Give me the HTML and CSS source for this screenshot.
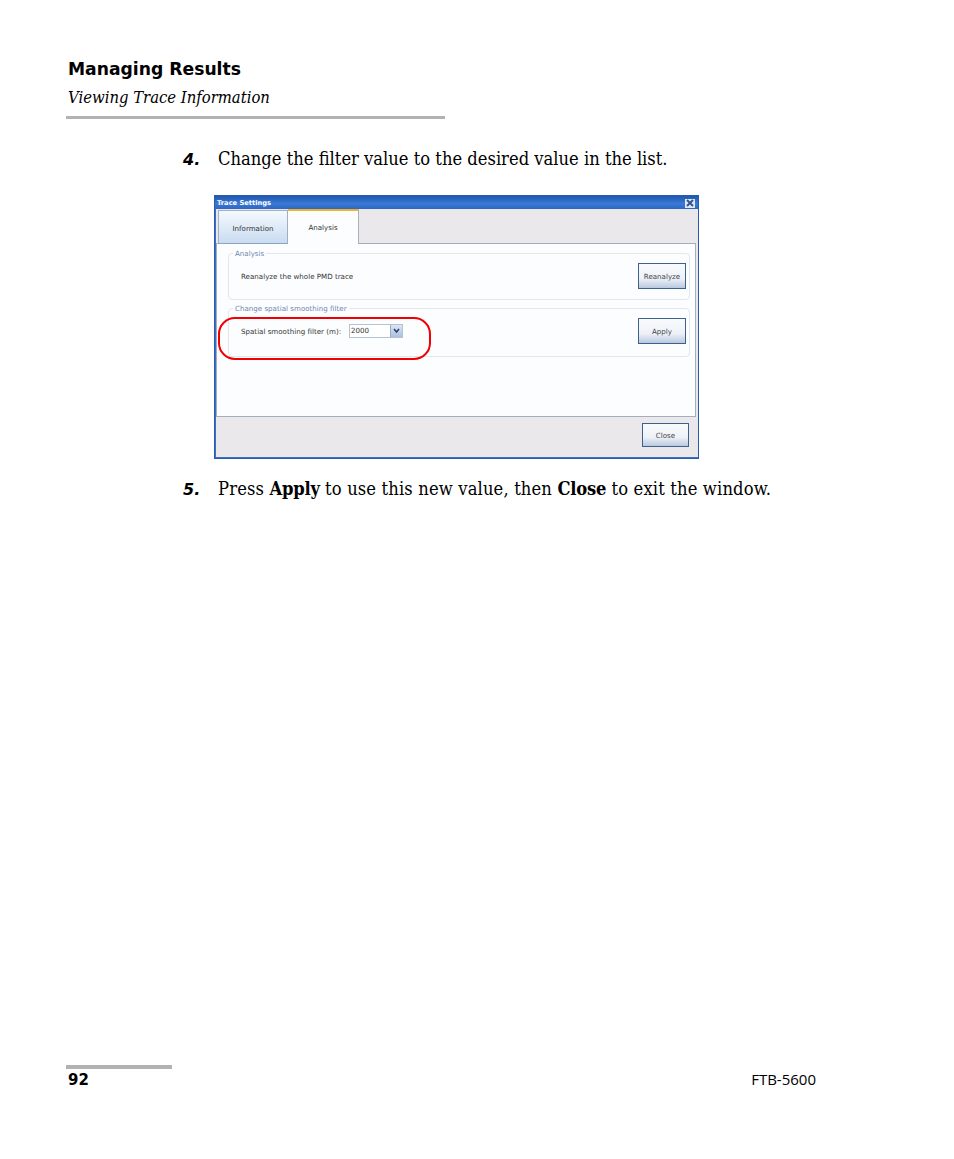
FILE: index.html
```html
<!DOCTYPE html>
<html lang="en">
<head>
<meta charset="utf-8">
<title>Managing Results</title>
<link rel="stylesheet" href="styles.css">
</head>
<body>
<div class="page">
  <header class="head">
    <div class="chapter">Managing Results</div>
    <div class="section">Viewing Trace Information</div>
    <div class="rule"></div>
  </header>
  <main class="content">
    <div class="step"><span class="num">4.</span><p>Change the filter value to the desired value in the list.</p></div>
    <div class="dialog">
      <div class="titlebar"><span>Trace Settings</span><span class="x">
        <svg width="8" height="8" viewBox="0 0 8 8"><path d="M1 1l6 6M7 1l-6 6" stroke="#33558f" stroke-width="2"/></svg></span></div>
      <div class="dlgbody">
        <div class="tabs">
          <div class="tab off">Information</div>
          <div class="tab on">Analysis</div>
        </div>
        <div class="panel">
          <fieldset class="group g1">
            <legend>Analysis</legend>
            <div class="label">Reanalyze the whole PMD trace</div>
            <div class="btn">Reanalyze</div>
          </fieldset>
          <fieldset class="group g2">
            <legend>Change spatial smoothing filter</legend>
            <div class="label">Spatial smoothing filter (m):</div>
            <div class="select"><span class="val">2000</span><span class="arrow">
              <svg width="7" height="6" viewBox="0 0 7 6"><path d="M1 1l2.500 3 2.500-3" fill="none" stroke="#2b3f63" stroke-width="1.500"/></svg></span></div>
            <div class="btn push">Apply</div>
          </fieldset>
          <div class="callout"></div>
        </div>
        <div class="actions"><div class="btn">Close</div></div>
      </div>
    </div>
    <div class="step s5"><span class="num">5.</span><p>Press <b>Apply</b> to use this new value, then <b>Close</b> to exit the window.</p></div>
  </main>
  <footer class="foot">
    <div class="footrule"></div>
    <div class="footrow"><span class="pageno">92</span><span class="model">FTB-5600</span></div>
  </footer>
</div>
</body>
</html>
```
FILE: styles.css
```css
* { box-sizing: border-box; }
html, body { margin: 0; background: #fff; }
.page { width: 954px; height: 1159px; display: flex; flex-direction: column; padding: 58px 0 0 66px; color: #000; overflow: hidden; }
.chapter { font: 700 17.200px/22px "DejaVu Sans", sans-serif; padding-left: 2px; }
.section { font: italic 16.500px/22px "DejaVu Serif", serif; font-stretch: condensed; padding-left: 2px; margin-top: 7px; }
.rule { width: 379px; height: 3px; background: #b2b2b2; margin-top: 7px; }
.content { padding-left: 117px; margin-top: 28px; }
.step { display: flex; align-items: baseline; height: 24px; }
.num { font: italic 700 16px/24px "DejaVu Sans", sans-serif; width: 35px; flex: none; }
.step p { margin: 0; font: 18.200px/24px "DejaVu Serif", serif; font-stretch: condensed; white-space: nowrap; }
.step b { font-weight: 700; letter-spacing: -0.200px; }
.s5 { margin-top: 18px; }
.s5 p { letter-spacing: 0.150px; }
.dialog { width: 485px; height: 264px; margin: 24px 0 0 31px; border: 1px solid #2a5aa8; background: #3a72c8; padding: 0 0 1px 1px; font-family: "DejaVu Sans", sans-serif; display: flex; flex-direction: column; }
.titlebar { height: 13px; flex: none; display: flex; justify-content: space-between; align-items: center; color: #fff; font: 700 6.700px/13px "DejaVu Sans", sans-serif; background: linear-gradient(#1f57b0, #3a7ad6 60%, #2e66c0); margin: 0 0 0 -1px; padding: 1px 2px 0; }
.x { width: 10px; height: 9px; background: #dfe8f6; display: flex; align-items: center; justify-content: center; margin-right: 1px; }
.dlgbody { flex: 1; background: #ebe8ec; display: flex; flex-direction: column; min-height: 0; }
.tabs { height: 35px; flex: none; display: flex; align-items: flex-end; padding-left: 2px; position: relative; z-index: 1; margin-bottom: -1px; }
.tab { font-size: 7.100px; color: #333; display: flex; align-items: center; justify-content: center; }
.off { width: 70px; height: 34px; background: linear-gradient(#f5f9fe, #c9dcf1); border: 1px solid #9fb0c4; border-bottom-color: #8fa3bd; padding-top: 2px; }
.on { width: 71px; height: 35px; background: #fcfdff; border-top: 2px solid #f0b030; border-right: 1px solid #a8b0bc; }
.panel { width: 480px; height: 174px; flex: none; position: relative; background: #fcfdff; border: 1px solid #a3aebf; padding: 4px 5px 0 11px; }
.group { margin: 0; padding: 0 3px 0 12px; border: 1px solid #e4e6ea; border-radius: 4px; display: flex; align-items: center; font-size: 7.100px; color: #333; }
.group legend { padding: 2px 2px 0; margin-left: -8px; color: #6f86b0; font-size: 7.100px; line-height: 8px; }
.g1 { height: 52px; justify-content: space-between; padding-bottom: 5px; }
.g2 { height: 54px; margin-top: 3px; padding-bottom: 7px; }
.label { white-space: nowrap; }
.select { width: 54px; height: 14px; margin-left: 8px; display: flex; border: 1px solid #b5c2d4; background: #fff; font-size: 7.100px; }
.val { flex: 1; padding-left: 1px; line-height: 12px; color: #333; }
.arrow { width: 12px; background: linear-gradient(#dbe6f4, #a9c0de); border-left: 1px solid #9aaac0; display: flex; align-items: center; justify-content: center; }
.btn { width: 48px; height: 26px; flex: none; border: 1px solid #3d618f; background: linear-gradient(#f8fafd 0, #eef2f8 60%, #b9c9de 100%); font-size: 7.100px; color: #444; display: flex; align-items: center; justify-content: center; }
.push { margin-left: auto; }
.callout { position: absolute; left: 1px; top: 73px; width: 213px; height: 43px; border: 2px solid #f00000; border-radius: 17px; }
.actions { flex: 1; display: flex; justify-content: flex-end; align-items: flex-start; padding: 6px 9px 0 0; }
.actions .btn { width: 47px; height: 24px; }
.foot { margin-top: auto; padding-bottom: 68px; }
.footrule { width: 106px; height: 4px; background: #b2b2b2; }
.footrow { display: flex; justify-content: space-between; width: 750px; padding-left: 2px; align-items: baseline; margin-top: -1px; }
.pageno { font: 700 15px/22px "DejaVu Sans", sans-serif; }
.model { font: 15px/22px "Open Sans", sans-serif; }
```
